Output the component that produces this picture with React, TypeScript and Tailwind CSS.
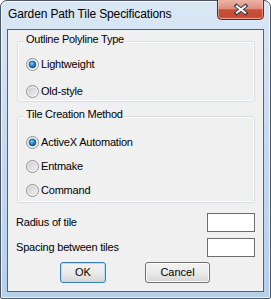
import React from "react";

function Radio({ checked }: { checked?: boolean }) {
  return (
    <svg width="13" height="13" viewBox="0 0 13 13" className="shrink-0">
      <defs>
        <linearGradient id="rbg" x1="0" y1="0" x2="1" y2="1">
          <stop offset="0" stopColor="#e0e0e0" />
          <stop offset="1" stopColor="#ffffff" />
        </linearGradient>
        <linearGradient id="rin" x1="0" y1="0" x2="1" y2="1">
          <stop offset="0" stopColor="#cbcbcb" />
          <stop offset="1" stopColor="#f6f6f6" />
        </linearGradient>
        <radialGradient id="rdot" cx="0.4" cy="0.35" r="0.7">
          <stop offset="0" stopColor="#7fd0ff" />
          <stop offset="0.5" stopColor="#2a8ad4" />
          <stop offset="1" stopColor="#0b3f78" />
        </radialGradient>
      </defs>
      <circle cx="6.5" cy="6.5" r="6" fill="url(#rbg)" stroke="#8f8f8f" strokeWidth="1" />
      {checked ? (
        <circle cx="6.5" cy="6.5" r="3.4" fill="url(#rdot)" stroke="#1c4f86" strokeWidth="0.8" />
      ) : (
        <circle cx="6.5" cy="6.5" r="3.6" fill="url(#rin)" stroke="#c8c8c8" strokeWidth="0.6" />
      )}
    </svg>
  );
}

function CloseButton() {
  return (
    <svg width="47" height="20" viewBox="0 0 47 20" className="-mt-[1px] shrink-0">
      <defs>
        <linearGradient id="cb" x1="0" y1="0" x2="0" y2="1">
          <stop offset="0" stopColor="#edb3a6" />
          <stop offset="0.45" stopColor="#dc8e7e" />
          <stop offset="0.5" stopColor="#c8503a" />
          <stop offset="0.85" stopColor="#c44a33" />
          <stop offset="1" stopColor="#d8735a" />
        </linearGradient>
      </defs>
      <path d="M0.5 0 V15.5 Q0.5 19.5 4.5 19.5 H42.5 Q46.5 19.5 46.5 15.5 V0" fill="url(#cb)" stroke="#5e2a22" strokeWidth="1" />
      <path d="M1.5 1 V15.5 Q1.5 18.5 4.5 18.5 H42.5 Q45.5 18.5 45.5 15.5 V1" fill="none" stroke="rgba(255,220,210,0.45)" strokeWidth="1" />
      <g strokeLinecap="square">
        <path d="M19.5 6 L28.5 13 M28.5 6 L19.5 13" stroke="#3d3f47" strokeWidth="4" />
        <path d="M19.8 6.3 L28.2 12.7 M28.2 6.3 L19.8 12.7" stroke="#ffffff" strokeWidth="2" />
      </g>
    </svg>
  );
}

function Group({
  label,
  children,
  className,
}: {
  label: string;
  children: React.ReactNode;
  className: string;
}) {
  return (
    <div className={`relative ml-[9px] mr-[8px] rounded-[3px] border border-[#d5dfe5] shadow-[inset_0_0_0_1px_#ffffff] flex flex-col ${className}`}>
      <span className="absolute left-[6px] -top-[9px] bg-[#f0f0f0] px-[2px] text-[11px] leading-[13px] text-black tracking-[-0.25px]">
        {label}
      </span>
      {children}
    </div>
  );
}

function RadioRow({ checked, label }: { checked?: boolean; label: string }) {
  return (
    <div className="h-[14px] flex items-center gap-[2px] pl-[8px]">
      <Radio checked={checked} />
      <span className="text-[11px] leading-[13px] text-black tracking-[-0.2px]">{label}</span>
    </div>
  );
}

function Btn({ children, def, w }: { children: React.ReactNode; def?: boolean; w: string }) {
  return (
    <div
      className={`${w} h-[21px] rounded-[3px] border flex items-center justify-center text-[11px] text-black bg-gradient-to-b from-[#f2f2f2] via-[#ebebeb] to-[#d6d6d6] ${
        def
          ? "border-[#3c7fb1] shadow-[inset_0_0_0_1px_#a8e1fb]"
          : "border-[#707070] shadow-[inset_0_0_0_1px_#fcfcfc]"
      }`}
    >
      {children}
    </div>
  );
}

export default function App() {
  return (
    <div
      className="w-[271px] h-[299px] bg-white"
      style={{ fontFamily: '"Liberation Sans", Arial, sans-serif' }}
    >
      <div className="w-[271px] h-[299px] flex flex-col rounded-t-[7px] rounded-b-[2px] border border-[#4b5765] bg-gradient-to-b from-[#dae7f5] via-[#c5daf0] to-[#b6d0ec] px-[6px] pb-[6px] shadow-[inset_0_0_0_1px_rgba(255,255,255,0.7)]">
        <div className="h-[28px] flex items-start justify-between">
          <span className="pl-[1px] pt-[6px] text-[12px] leading-[15px] text-black tracking-[-0.13px]">
            Garden Path Tile Specifications
          </span>
          <CloseButton />
        </div>
        <div className="flex-1 border border-[#58626e] bg-[#f0f0f0] flex flex-col">
          <Group label="Outline Polyline Type" className="mt-[11px] h-[61px] pt-[15px] gap-[13px]">
            <RadioRow checked label="Lightweight" />
            <RadioRow label="Old-style" />
          </Group>
          <Group label="Tile Creation Method" className="mt-[14px] h-[87px] pt-[18px] gap-[10px]">
            <RadioRow checked label="ActiveX Automation" />
            <RadioRow label="Entmake" />
            <RadioRow label="Command" />
          </Group>
          <div className="mt-[10px] pl-[8px] pr-[8px] flex flex-col gap-[6px]">
            <div className="h-[19px] flex items-center justify-between">
              <span className="text-[11px] leading-[13px] text-black tracking-[-0.2px]">Radius of tile</span>
              <div className="w-[48px] h-[19px] border border-[#6d6d6d] bg-white" />
            </div>
            <div className="h-[19px] flex items-center justify-between">
              <span className="text-[11px] leading-[13px] text-black tracking-[-0.2px]">Spacing between tiles</span>
              <div className="w-[48px] h-[19px] border border-[#6d6d6d] bg-white" />
            </div>
          </div>
          <div className="mt-[5px] flex pl-[52px] gap-[39px]">
            <Btn def w="w-[46px]">OK</Btn>
            <Btn w="w-[65px]">Cancel</Btn>
          </div>
        </div>
      </div>
    </div>
  );
}
